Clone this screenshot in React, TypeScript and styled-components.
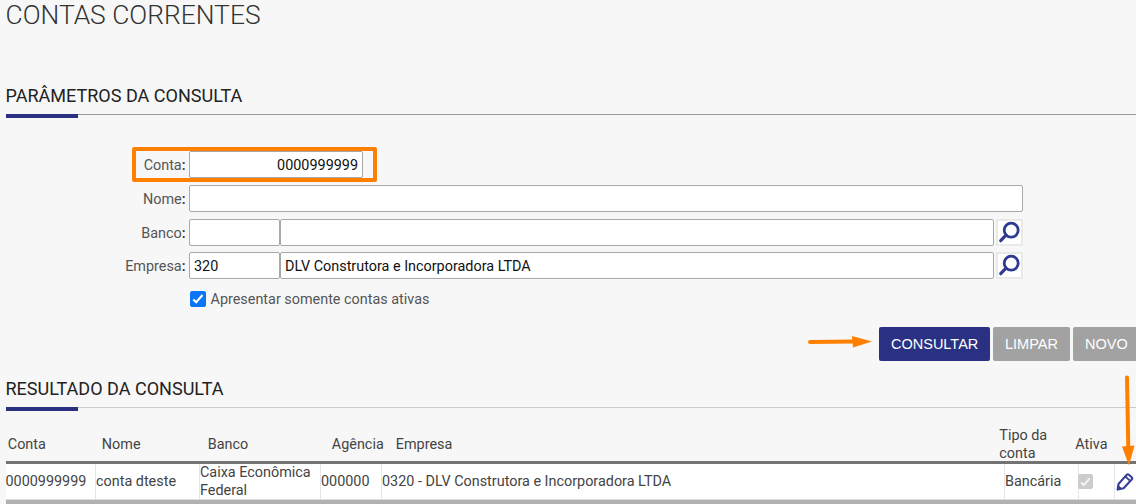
import { useState } from 'react';
import styled, { createGlobalStyle } from 'styled-components';

const GlobalStyle = createGlobalStyle`
  * {
    box-sizing: border-box;
  }

  html,
  body {
    margin: 0;
    padding: 0;
    overflow: hidden;
    background: #f7f7f7;
  }

  body,
  input {
    font-family: Roboto, 'Liberation Sans', sans-serif;
    font-size: 14.4px;
  }
`;

const Page = styled.main`
  position: relative;
  display: flex;
  flex-direction: column;
  width: 1136px;
  height: 504px;
  padding-left: 5.5px;
  overflow: hidden;
  color: #444;

  > * {
    flex-shrink: 0;
  }
`;

const PageTitle = styled.h1`
  height: 82px;
  margin: 0;
  color: #333;
  font-size: 26.4px;
  font-weight: 300;
  line-height: 30px;
`;

const SectionTitle = styled.h2`
  height: 32px;
  margin: 0;
  color: #222;
  font-size: 18.05px;
  font-weight: 400;
  line-height: 28px;
`;

const Rule = styled.div<{ $color: string }>`
  height: 4px;
  border-top: 1px solid ${({ $color }) => $color};

  &::before {
    content: '';
    display: block;
    width: 72.5px;
    height: 4px;
    margin-top: -1px;
    background: #2a3183;
  }
`;

const Form = styled.form`
  display: flex;
  flex-direction: column;
  gap: 6.7px;
  height: 191px;
  padding-top: 33.3px;
`;

const Row = styled.div`
  display: flex;
  height: 27px;
`;

const Label = styled.label`
  width: 180px;
  margin-right: 3.5px;
  color: #555;
  line-height: 29px;
  text-align: right;

  &::after {
    content: ':';
    color: #333;
    font-weight: 500;
  }
`;

const Input = styled.input<{ $width: number }>`
  width: ${({ $width }) => $width}px;
  height: 27px;
  padding: 2px 4px 0;
  border: 1px solid #a8a8a8;
  border-radius: 2px;
  outline: none;
  background: #fff;
  color: #111;
  text-align: ${({ type }) => (type === 'tel' ? 'right' : 'left')};
`;

const SearchButton = styled.button`
  display: flex;
  width: 27px;
  height: 27px;
  margin-left: 2px;
  padding: 0;
  border: 2px solid #e9e9e9;
  background: #fff;
`;

const CheckRow = styled.label`
  display: flex;
  align-items: center;
  height: 18px;
  margin-top: 4px;
  padding-left: 184px;
  gap: 5px;
  color: #555;
`;

const Checkbox = styled.button<{ $muted?: boolean; $checked: boolean }>`
  display: flex;
  width: ${({ $muted }) => ($muted ? 15 : 16)}px;
  height: ${({ $muted }) => ($muted ? 15 : 16)}px;
  margin-left: ${({ $muted }) => ($muted ? -1 : 0)}px;
  padding: 0;
  border: 1px solid ${({ $muted }) => ($muted ? '#ccc' : '#0b76f5')};
  border-radius: 2px;
  background: ${({ $muted, $checked }) =>
    $muted ? '#ccc' : $checked ? '#0b76f5' : '#fff'};
`;

const Actions = styled.div`
  display: flex;
  gap: 3px;
  height: 48px;
  margin-top: 18px;
  padding-left: 873.5px;
`;

const ActionButton = styled.button<{ $primary?: boolean; $width: number }>`
  flex: none;
  width: ${({ $width }) => $width}px;
  height: 34px;
  padding: 0 12px;
  border: none;
  border-radius: 2px;
  background: ${({ $primary }) => ($primary ? '#2a3183' : '#a2a2a2')};
  color: #fff;
  font-family: 'Liberation Sans', Arial, sans-serif;
  font-size: 14.5px;
  text-align: left;
`;

const ResultTable = styled.div`
  display: flex;
  flex-direction: column;
`;

const HeaderRow = styled.div`
  display: grid;
  grid-template-columns: 94px 106px 124px 64px 603.5px 76px 1fr;
  align-items: center;
  height: 53px;
  padding: 16px 0 0 2.3px;
  border-bottom: 3px solid #737373;
  line-height: 17.5px;
`;

const BodyRow = styled.div`
  display: grid;
  grid-template-columns: 89.5px 104px 121px 61px 623px 74px 36px 1fr;
  height: 36px;
  border-bottom: 1px solid #ddd;
  background: #fff;
  line-height: 17.5px;
`;

const Cell = styled.div`
  display: flex;
  align-items: center;
  white-space: pre-line;

  & + & {
    border-left: 1px solid #e6e6e6;
  }
`;

const HeaderCell = styled.div`
  white-space: pre-line;
`;

const TableFooter = styled.div`
  height: 8px;
  background: #b1b1b1;
`;

const Highlight = styled.div`
  position: absolute;
  top: 147px;
  left: 132px;
  width: 245px;
  height: 35px;
  border: 4px solid #ff8000;
  border-radius: 2px;
`;

const Arrows = styled.svg`
  position: absolute;
  top: 0;
  left: 0;
  pointer-events: none;
`;

const SearchIcon = () => (
  <svg width="23" height="23" viewBox="0 0 23 23" fill="none" stroke="#2f3b91">
    <circle cx="13.2" cy="9.2" r="7" strokeWidth="2.8" />
    <path d="M8 14.2 L2.7 19.7" strokeWidth="3.2" strokeLinecap="round" />
  </svg>
);

const CheckIcon = ({ color }: { color: string }) => (
  <svg width="14" height="14" viewBox="0 0 14 14" fill="none">
    <path d="M2.3 7.5 L5.2 10.3 L11.5 3" stroke={color} strokeWidth="2.1" />
  </svg>
);

const PencilIcon = () => (
  <svg width="19" height="20" viewBox="-1 0 19 20" fill="none" stroke="#343f96">
    <path
      d="M1.6 17.6 L2.5 12 L10.6 2.9 Q11.7 1.8 12.9 2.8 L15.7 5.2 Q16.7 6.3 15.7 7.5 L7.6 16.2 Z"
      strokeWidth="2.1"
      strokeLinejoin="round"
    />
    <path d="M9.3 4.5 L13.9 8.6" strokeWidth="1.8" />
    <path d="M1.8 17.5 L2.4 13.8 L5.5 16.6 Z" fill="#343f96" />
  </svg>
);

const headers = [
  'Conta',
  'Nome',
  'Banco',
  'Agência',
  'Empresa',
  'Tipo da\nconta',
  'Ativa',
];

const account = [
  '0000999999',
  'conta dteste',
  'Caixa Econômica\nFederal',
  '000000',
  '0320 - DLV Construtora e Incorporadora LTDA',
  'Bancária',
];

const App = () => {
  const [onlyActive, setOnlyActive] = useState(true);

  return (
    <Page>
      <GlobalStyle />
      <PageTitle>CONTAS CORRENTES</PageTitle>

      <SectionTitle>PARÂMETROS DA CONSULTA</SectionTitle>
      <Rule $color="#999" />
      <Form>
        <Row>
          <Label htmlFor="conta">Conta</Label>
          <Input id="conta" type="tel" $width={174} defaultValue="0000999999" />
        </Row>
        <Row>
          <Label htmlFor="nome">Nome</Label>
          <Input id="nome" $width={834} />
        </Row>
        <Row>
          <Label htmlFor="banco">Banco</Label>
          <Input id="banco" $width={91} />
          <Input $width={714} />
          <SearchButton type="button">
            <SearchIcon />
          </SearchButton>
        </Row>
        <Row>
          <Label htmlFor="empresa">Empresa</Label>
          <Input id="empresa" $width={91} defaultValue="320" />
          <Input
            $width={714}
            defaultValue="DLV Construtora e Incorporadora LTDA"
          />
          <SearchButton type="button">
            <SearchIcon />
          </SearchButton>
        </Row>
        <CheckRow>
          <Checkbox
            type="button"
            $checked={onlyActive}
            onClick={() => setOnlyActive(!onlyActive)}
          >
            {onlyActive && <CheckIcon color="#fff" />}
          </Checkbox>
          Apresentar somente contas ativas
        </CheckRow>
      </Form>

      <Actions>
        <ActionButton $primary $width={111}>
          CONSULTAR
        </ActionButton>
        <ActionButton $width={77}>LIMPAR</ActionButton>
        <ActionButton $width={77}>NOVO</ActionButton>
      </Actions>

      <SectionTitle>RESULTADO DA CONSULTA</SectionTitle>
      <Rule $color="#ccc" />
      <ResultTable>
        <HeaderRow>
          {headers.map((header) => (
            <HeaderCell key={header}>{header}</HeaderCell>
          ))}
        </HeaderRow>
        <BodyRow>
          {account.map((value) => (
            <Cell key={value}>{value}</Cell>
          ))}
          <Cell>
            <Checkbox type="button" disabled $muted $checked>
              <CheckIcon color="#f4f4f4" />
            </Checkbox>
          </Cell>
          <Cell>
            <PencilIcon />
          </Cell>
        </BodyRow>
        <TableFooter />
      </ResultTable>

      <Highlight />
      <Arrows width="1136" height="504" fill="#ff8000" stroke="#ff8000">
        <path d="M810 342 L854 341.5" strokeWidth="4" strokeLinecap="round" />
        <path d="M852 336 L872 341.5 L853 347.5 Z" stroke="none" />
        <path d="M1127 377.5 L1128.3 448" strokeWidth="4" strokeLinecap="round" />
        <path d="M1122 446.5 L1134.5 445.5 L1129 465.5 Z" stroke="none" />
      </Arrows>
    </Page>
  );
};

export default App;
